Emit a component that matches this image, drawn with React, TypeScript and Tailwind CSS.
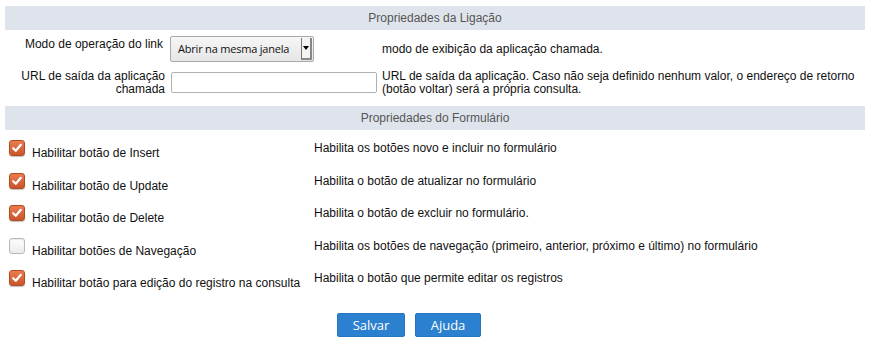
import React from "react";

const SectionHeader: React.FC<{ title: string }> = ({ title }) => (
  <div className="h-[24px] bg-[#dfe4ec] flex items-center justify-center text-[#555] text-[12px]">
    {title}
  </div>
);

const Checkbox: React.FC<{ checked: boolean }> = ({ checked }) =>
  checked ? (
    <div className="w-[16px] h-[16px] shrink-0 rounded-[3px] border border-[#b24b22] bg-gradient-to-b from-[#ea7c50] to-[#c9552a] flex items-center justify-center shadow-[0_1px_1px_rgba(0,0,0,0.25)]">
      <svg width="12" height="12" viewBox="0 0 12 12">
        <path
          d="M2.2 6.2 L4.8 8.8 L9.8 2.8"
          fill="none"
          stroke="#fff"
          strokeWidth="2.2"
          strokeLinecap="round"
          strokeLinejoin="round"
        />
      </svg>
    </div>
  ) : (
    <div className="w-[16px] h-[16px] shrink-0 rounded-[3px] border border-[#b8b8b8] bg-gradient-to-b from-[#fdfdfd] to-[#ececec] shadow-[inset_0_1px_1px_rgba(0,0,0,0.08)]" />
  );

const formRows = [
  {
    checked: true,
    label: "Habilitar botão de Insert",
    desc: "Habilita os botões novo e incluir no formulário",
  },
  {
    checked: true,
    label: "Habilitar botão de Update",
    desc: "Habilita o botão de atualizar no formulário",
  },
  {
    checked: true,
    label: "Habilitar botão de Delete",
    desc: "Habilita o botão de excluir no formulário.",
  },
  {
    checked: false,
    label: "Habilitar botões de Navegação",
    desc: "Habilita os botões de navegação (primeiro, anterior, próximo e último) no formulário",
  },
  {
    checked: true,
    label: "Habilitar botão para edição do registro na consulta",
    desc: "Habilita o botão que permite editar os registros",
  },
];

export default function App() {
  return (
    <div className="w-[870px] h-[349px] bg-white text-[#111] text-[12px] leading-[14px] font-['Liberation_Sans',Arial,sans-serif] overflow-hidden">
      <div className="px-[5px] pt-[6px]">
        <SectionHeader title="Propriedades da Ligação" />

        {/* Link properties */}
        <div className="grid grid-cols-[161px_215px_1fr] mt-[6px]">
          <div className="text-right pr-[3px] pt-[1px]">Modo de operação do link</div>
          <div className="pl-[4px]">
            <div className="w-[144px] h-[26px] flex items-stretch rounded-[2px] border border-[#a9a9a9] bg-gradient-to-b from-[#f6f6f6] to-[#e6e6e6]">
              <span className="flex-1 flex items-center pl-[7px] text-[11px] tracking-[-0.2px] text-[#111] font-['Open_Sans',sans-serif]">
                Abrir na mesma janela
              </span>
              <span className="w-[11px] my-[1px] mr-[1px] flex items-center justify-center border-l border-[#777] border-r-2 border-b-2 border-r-[#888] border-b-[#888] bg-[#f3f3f3]">
                <svg width="6" height="4" viewBox="0 0 6 4">
                  <path d="M0 0 H6 L3 4 Z" fill="#000" />
                </svg>
              </span>
            </div>
          </div>
          <div className="flex items-center pl-[1px]">modo de exibição da aplicação chamada.</div>
        </div>

        <div className="grid grid-cols-[161px_215px_1fr] items-center mt-[8px] leading-[12.5px]">
          <div className="text-right pr-[1px]">
            URL de saída da aplicação
            <br />
            chamada
          </div>
          <div className="pl-[5px]">
            <div className="w-[206px] h-[21px] rounded-[2px] border border-[#b0b0b0] bg-white" />
          </div>
          <div className="pl-[1px]">
            URL de saída da aplicação. Caso não seja definido nenhum valor, o endereço de retorno
            <br />
            (botão voltar) será a própria consulta.
          </div>
        </div>

        <div className="mt-[11px]">
          <SectionHeader title="Propriedades do Formulário" />
        </div>

        {/* Form properties */}
        <div className="flex flex-col">
          {formRows.map((row) => (
            <div key={row.label} className="flex h-[32.5px] pt-[10px]">
              <div className="w-[309px] flex items-start pl-[4px]">
                <Checkbox checked={row.checked} />
                <span className="ml-[7px] mt-[6px] whitespace-nowrap">{row.label}</span>
              </div>
              <div className="mt-[1px] whitespace-nowrap">{row.desc}</div>
            </div>
          ))}
        </div>

        <div className="flex gap-[10px] ml-[332px] mt-[20px] font-['Open_Sans',sans-serif] text-[13px]">
          <button className="w-[68px] h-[24px] rounded-[2px] bg-[#2b80cf] border border-[#2774c0] text-white">
            Salvar
          </button>
          <button className="w-[66px] h-[24px] rounded-[2px] bg-[#2b80cf] border border-[#2774c0] text-white">
            Ajuda
          </button>
        </div>
      </div>
    </div>
  );
}
